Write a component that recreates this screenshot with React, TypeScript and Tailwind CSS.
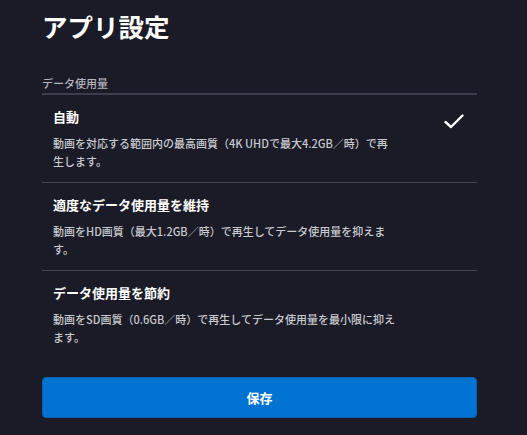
import { useState } from "react";

type Option = {
  id: string;
  title: string;
  lines: string[];
};

const options: Option[] = [
  {
    id: "auto",
    title: "自動",
    lines: ["動画を対応する範囲内の最高画質（4K UHDで最大4.2GB／時）で再", "生します。"],
  },
  {
    id: "moderate",
    title: "適度なデータ使用量を維持",
    lines: ["動画をHD画質（最大1.2GB／時）で再生してデータ使用量を抑えま", "す。"],
  },
  {
    id: "save",
    title: "データ使用量を節約",
    lines: ["動画をSD画質（0.6GB／時）で再生してデータ使用量を最小限に抑え", "ます。"],
  },
];

function CheckIcon() {
  return (
    <svg width="20" height="15" viewBox="0 0 20 15" fill="none">
      <path
        d="M1.5 8 L7 13 L18.5 1.5"
        stroke="white"
        strokeWidth="2.4"
        strokeLinecap="round"
        strokeLinejoin="round"
      />
    </svg>
  );
}

export default function App() {
  const [selected, setSelected] = useState("auto");

  return (
    <div
      className="min-h-[435px] w-full bg-[#1a1b27] text-white"
      style={{ fontFamily: '"Noto Sans CJK JP", "Noto Sans", sans-serif' }}
    >
      <div className="ml-[42px] w-[435px] pt-[11px]">
        <h1 className="text-[25.5px] font-bold leading-[30px]">アプリ設定</h1>

        <div className="mt-[34px] border-b-2 border-[#3d3e4b] pb-[2px]">
          <span className="block text-[11px] font-medium leading-[16px] text-[#b4b5bd]">
            データ使用量
          </span>
        </div>

        <div>
          {options.map((opt, i) => (
            <button
              key={opt.id}
              onClick={() => setSelected(opt.id)}
              className={`flex w-full items-start justify-between pl-[11px] pr-[13px] pt-[14px] pb-[12px] text-left ${
                i < options.length - 1 ? "border-b border-[#44454f]" : ""
              }`}
            >
              <div className="w-[370px]">
                <div className="text-[13px] font-bold leading-[16px]">{opt.title}</div>
                <p className="mt-[9px] text-[11px] font-medium leading-[18px] text-[#c9c9cf]">
                  {opt.lines.map((line) => (
                    <span key={line} className="block whitespace-nowrap">
                      {line}
                    </span>
                  ))}
                </p>
              </div>
              {selected === opt.id && (
                <div className="mt-[5px]">
                  <CheckIcon />
                </div>
              )}
            </button>
          ))}
        </div>

        <button className="mt-[19px] h-[41px] w-full rounded-[4px] border border-[#0a5fae] bg-[#0073d3] text-[13px] font-bold text-white">
          保存
        </button>
      </div>
    </div>
  );
}
